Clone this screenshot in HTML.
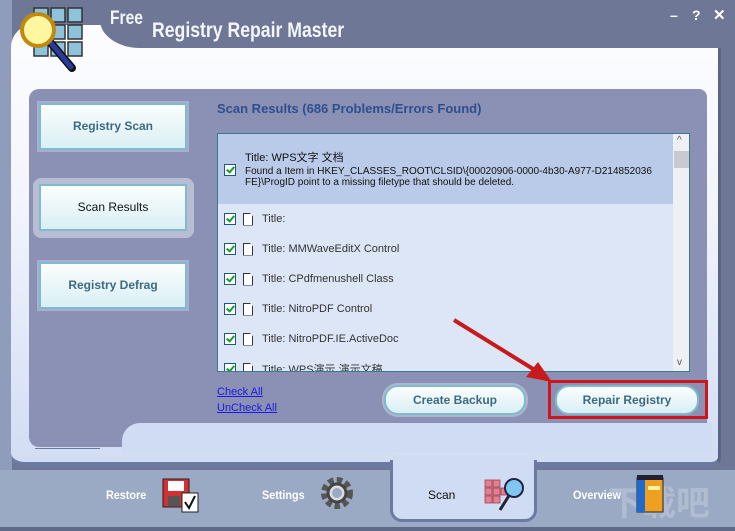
<!DOCTYPE html>
<html><head><meta charset="utf-8"><style>
*{margin:0;padding:0;box-sizing:border-box}
html,body{width:735px;height:531px;overflow:hidden}
body{background:#6f7797;font-family:"Liberation Sans","Noto Sans CJK SC",sans-serif;position:relative}
.abs{position:absolute}
.title{color:#f4f6fb;font-weight:bold;transform-origin:0 0;white-space:nowrap}
.btn{position:absolute;background:linear-gradient(#fbfdfe,#d9eff4);border:2px solid #7fbccb;color:#3d6a80;font-weight:bold;font-size:12px;text-align:center;box-shadow:0 0 0 2px #a9aed0}
.row{position:absolute;left:0;width:455px;height:30px;font-size:11px;color:#333;display:flex;align-items:center}
.cb{width:12px;height:12px;border:1px solid #1c5a7a;background:#fff;margin-left:6px;position:relative}
.cb:after{content:"";position:absolute;left:3px;top:0px;width:3px;height:6px;border:solid #1a9a2a;border-width:0 2px 2px 0;transform:rotate(40deg)}
.doc{width:10px;height:13px;border:1px solid #333;background:#fff;margin-left:7px;margin-right:9px;clip-path:polygon(0 0,65% 0,100% 30%,100% 100%,0 100%)}
.tab{position:absolute;top:488px;color:#fff;font-weight:bold;font-size:12px;transform:scaleX(.9);transform-origin:0 0}
a{color:#1a1ae0;text-decoration:underline;font-size:11px}
</style></head><body>
<div class="abs" style="left:0;top:0;width:12px;height:470px;background:#8f9cbc"></div>
<div class="abs" style="left:11px;top:25px;width:710px;height:442px;background:linear-gradient(#fdfdff 0%,#f2f5fc 40%,#d2ddf3 100%);border-radius:22px 4px 10px 14px;border-right:3px solid #5a6586;border-bottom:5px solid #6a7aa0"></div>
<div class="abs" style="left:100px;top:0;width:640px;height:48px;background:#6f7797;border-bottom-left-radius:40px 28px"></div>
<div class="abs" style="left:600px;top:0;width:135px;height:48px;background:#6f7797"></div>
<div class="abs" style="left:0;top:470px;width:735px;height:61px;background:#9aa9c4;overflow:hidden">
<div class="abs" style="left:608px;top:14px;font-size:34px;line-height:40px;color:rgba(255,255,255,.22);font-weight:bold;white-space:nowrap">下载吧</div>
</div>
<div class="abs" style="left:0;top:527px;width:735px;height:4px;background:#5f6a88"></div>
<div class="abs" style="left:390px;top:460px;width:147px;height:62px;background:#d0dcf3;border-radius:0 0 12px 12px;border:3px solid #6a7aa0;border-top:none"></div>
<div class="abs" style="left:393px;top:455px;width:141px;height:12px;background:#d0dcf3"></div>
<svg class="abs" style="left:14px;top:4px" width="75" height="68" viewBox="0 0 75 68">
<g fill="#8fc3dc" stroke="#333" stroke-width="1.5">
<rect x="20" y="4" width="14" height="14"/><rect x="37" y="4" width="14" height="14"/><rect x="54" y="4" width="14" height="14"/>
<rect x="37" y="21" width="14" height="14"/><rect x="54" y="21" width="14" height="14"/>
<rect x="20" y="38" width="14" height="14"/><rect x="37" y="38" width="14" height="14"/><rect x="54" y="38" width="14" height="14"/>
</g>
<line x1="36" y1="38" x2="58" y2="64" stroke="#111" stroke-width="8" stroke-linecap="round"/>
<line x1="36" y1="38" x2="57" y2="63" stroke="#2a3a9a" stroke-width="5" stroke-linecap="round"/>
<circle cx="24" cy="26" r="16" fill="#fff6a0" stroke="#c08a10" stroke-width="4"/>
</svg>
<div class="abs title" style="left:110px;top:8px;font-size:19px;transform:scaleX(.82)">Free</div>
<div class="abs title" style="left:152px;top:19px;font-size:21px;transform:scaleX(.84)">Registry Repair Master</div>
<div class="abs" style="left:670px;top:7px;color:#fff;font-weight:bold;font-size:14px">–</div>
<div class="abs" style="left:692px;top:7px;color:#fff;font-weight:bold;font-size:14px">?</div>
<div class="abs" style="left:713px;top:6px;color:#fff;font-weight:bold;font-size:15px">✕</div>
<div class="abs" style="left:29px;top:89px;width:678px;height:358px;background:#8b90b5;border-radius:10px 8px 12px 10px"></div>
<div class="abs" style="left:122px;top:423px;width:590px;height:30px;background:#d0dcf3;border-radius:18px 0 0 0"></div>
<div class="abs" style="left:35px;top:448px;width:65px;height:1px;background:#6a7aa0"></div>
<div class="btn" style="left:39px;top:103px;width:148px;height:47px;line-height:43px">Registry Scan</div>
<div class="abs" style="left:33px;top:178px;width:161px;height:60px;background:#b9bdd3;border-radius:8px"></div>
<div class="btn" style="left:39px;top:184px;width:148px;height:47px;line-height:43px;font-weight:normal;color:#111;box-shadow:none">Scan Results</div>
<div class="btn" style="left:39px;top:262px;width:148px;height:47px;line-height:43px">Registry Defrag</div>
<div class="abs" style="left:217px;top:101px;color:#2e4f8e;font-weight:bold;font-size:13px">Scan Results (686 Problems/Errors Found)</div>
<div class="abs" style="left:217px;top:133px;width:473px;height:239px;background:#dde6f7;border:1px solid #3c7a8a;overflow:hidden">
<div class="abs" style="left:0;top:0;width:455px;height:70px;background:#b9cbe8"></div>
<div class="abs" style="left:6px;top:30px"><div class="cb" style="margin-left:0"></div></div>
<div class="abs" style="left:27px;top:15px;font-size:11px;color:#111">Title: WPS文字 文档</div>
<div class="abs" style="left:27px;top:32px;font-size:10px;color:#111;line-height:11px;width:430px;white-space:nowrap">Found a Item in HKEY_CLASSES_ROOT\CLSID\{00020906-0000-4b30-A977-D214852036<br>FE}\ProgID point to a missing filetype that should be deleted.</div>
<div class="row" style="top:70px"><div class="cb"></div><div class="doc"></div>Title:</div>
<div class="row" style="top:100px"><div class="cb"></div><div class="doc"></div>Title: MMWaveEditX Control</div>
<div class="row" style="top:130px"><div class="cb"></div><div class="doc"></div>Title: CPdfmenushell Class</div>
<div class="row" style="top:160px"><div class="cb"></div><div class="doc"></div>Title: NitroPDF Control</div>
<div class="row" style="top:190px"><div class="cb"></div><div class="doc"></div>Title: NitroPDF.IE.ActiveDoc</div>
<div class="row" style="top:220px"><div class="cb"></div><div class="doc"></div>Title: WPS演示 演示文稿</div>
<div class="abs" style="left:455px;top:0;width:17px;height:237px;background:#eef0f4"></div>
<div class="abs" style="left:456px;top:17px;width:15px;height:17px;background:#c8cad0"></div>
<div class="abs" style="left:459px;top:1px;font-size:10px;color:#555">^</div>
<div class="abs" style="left:459px;top:223px;font-size:10px;color:#555">v</div>
</div>
<a class="abs" style="left:217px;top:386px">Check All</a>
<a class="abs" style="left:217px;top:402px">UnCheck All</a>
<div class="btn" style="left:384px;top:385px;width:142px;height:30px;line-height:26px;border-radius:14px;box-shadow:0 0 0 2px #b0b5cf">Create Backup</div>
<div class="abs" style="left:548px;top:380px;width:160px;height:39px;border:3px solid #d0141c"></div>
<div class="btn" style="left:555px;top:385px;width:144px;height:30px;line-height:26px;border-radius:14px;box-shadow:none">Repair Registry</div>
<svg class="abs" style="left:440px;top:310px" width="120" height="80"><line x1="14" y1="10" x2="98" y2="62" stroke="#c81a1a" stroke-width="4"/><polygon points="112,72 86,67 98,52" fill="#c81a1a"/></svg>
<div class="tab" style="left:106px">Restore</div>
<svg class="abs" style="left:162px;top:477px" width="38" height="36"><rect x="1" y="2" width="26" height="28" fill="#d43030" stroke="#222"/><rect x="6" y="4" width="16" height="10" fill="#fff"/><rect x="6" y="19" width="12" height="10" fill="#555"/><rect x="20" y="16" width="16" height="19" fill="#fff" stroke="#222"/><path d="M23 25l4 6 6-12" stroke="#111" stroke-width="2" fill="none"/></svg>
<div class="tab" style="left:262px">Settings</div>
<svg class="abs" style="left:320px;top:476px" width="36" height="34"><circle cx="17" cy="17" r="12" fill="none" stroke="#555" stroke-width="8" stroke-dasharray="5 3"/><circle cx="17" cy="17" r="9" fill="#ddd" stroke="#444" stroke-width="3"/><circle cx="17" cy="17" r="5" fill="#9aa9c4"/></svg>
<div class="abs" style="left:428px;top:488px;font-size:12px;color:#111">Scan</div>
<svg class="abs" style="left:484px;top:476px" width="42" height="38"><g fill="#e08090" stroke="#a04050" stroke-width=".8"><rect x="1" y="4" width="7" height="7"/><rect x="9" y="4" width="7" height="7"/><rect x="1" y="12" width="7" height="7"/><rect x="9" y="12" width="7" height="7"/><rect x="17" y="12" width="7" height="7"/><rect x="1" y="20" width="7" height="7"/><rect x="9" y="20" width="7" height="7"/></g><line x1="26" y1="18" x2="16" y2="34" stroke="#223" stroke-width="3"/><circle cx="30" cy="12" r="9" fill="#7fc7f0" stroke="#224" stroke-width="2"/></svg>
<div class="tab" style="left:573px">Overview</div>
<svg class="abs" style="left:636px;top:474px" width="30" height="40"><rect x="1" y="4" width="26" height="34" fill="#f0a020" stroke="#222"/><rect x="1" y="4" width="8" height="34" fill="#1f6ad0"/><rect x="1" y="1" width="26" height="5" fill="#223"/><rect x="12" y="12" width="12" height="4" fill="#fff3a0"/></svg>
</body></html>
